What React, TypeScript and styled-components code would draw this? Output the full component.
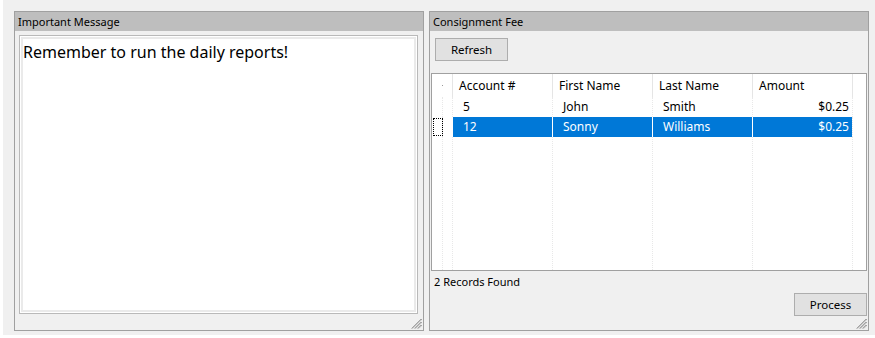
import React from "react";
import styled, { createGlobalStyle } from "styled-components";

const Global = createGlobalStyle`
  html, body { margin: 0; padding: 0; background: #ffffff; }
  body { font-family: "Noto Sans", "DejaVu Sans", sans-serif; color: #000; }
  * { box-sizing: border-box; }
`;

const Form = styled.div`
  width: 873px;
  height: 335px;
  margin-left: 3px;
  background: #f0f0f0;
  display: flex;
  gap: 5px;
  padding: 11px 0 0 11px;
`;

const Panel = styled.section<{ $w: number }>`
  position: relative;
  width: ${(p) => p.$w}px;
  height: 320px;
  border: 1px solid #a0a0a0;
  background: #f0f0f0;
  display: flex;
  flex-direction: column;
`;

const PanelHeader = styled.div`
  height: 19px;
  background: #bebebe;
  font-size: 11px;
  line-height: 19px;
  padding-left: 3px;
  color: #000;
  white-space: nowrap;
`;

const PanelBody = styled.div`
  flex: 1;
  display: flex;
  flex-direction: column;
  padding: 4px 5px 0 4px;
`;

const MessageBox = styled.div`
  height: 279px;
  border: 1px solid #b9b9b9;
  background: #fff;
  box-shadow: inset 0 0 0 1px #fff, inset 0 0 0 3px #eaeaea;
  padding: 4px 3px;
  font-size: 16px;
  line-height: 24px;
`;

const Grip = styled.svg`
  position: absolute;
  right: 1px;
  bottom: 1px;
  width: 11px;
  height: 11px;
`;

const Button = styled.button<{ $w: number }>`
  width: ${(p) => p.$w}px;
  height: 23px;
  background: #e1e1e1;
  border: 1px solid #adadad;
  font-family: inherit;
  font-size: 11.5px;
  color: #000;
  padding: 0;
`;

const RightBody = styled.div`
  flex: 1;
  display: flex;
  flex-direction: column;
  padding: 7px 1px 0 1px;
`;

const ButtonRow = styled.div<{ $end?: boolean }>`
  display: flex;
  justify-content: ${(p) => (p.$end ? "flex-end" : "flex-start")};
  padding: ${(p) => (p.$end ? "0" : "0 0 0 4px")};
`;

const Grid = styled.div`
  margin-top: 12px;
  height: 198px;
  border: 1px solid #a0a0a0;
  background: #fff;
  position: relative;
  overflow: hidden;
`;

const cols = "10px 10px 100px 100px 100px 100px 14px";

const HeaderRow = styled.div`
  display: grid;
  grid-template-columns: ${cols};
  height: 23px;
  font-size: 12px;
`;

const HeadCell = styled.div<{ $sep?: "solid" | "none" }>`
  padding-left: 6px;
  line-height: 23px;
  white-space: nowrap;
  border-left: ${(p) =>
    p.$sep === "solid" ? "1px solid #e5e5e5" : "1px solid transparent"};
  position: relative;
`;

const Tick = styled.span`
  position: absolute;
  left: -1px;
  top: 11px;
  width: 1px;
  height: 1px;
  background: #9a9a9a;
`;

const BodyRow = styled.div`
  display: grid;
  grid-template-columns: ${cols};
  height: 20px;
  font-size: 12px;
`;

const Cell = styled.div<{ $sel?: boolean; $right?: boolean }>`
  line-height: 20px;
  white-space: nowrap;
  padding: ${(p) => (p.$right ? "0 3px 0 0" : "0 0 0 10px")};
  text-align: ${(p) => (p.$right ? "right" : "left")};
  background: ${(p) => (p.$sel ? "#0078d7" : "transparent")};
  color: ${(p) => (p.$sel ? "#fff" : "#000")};
  border-left: 1px ${(p) => (p.$sel ? "solid #fff" : "dotted #e8e8e8")};
`;

const FocusCell = styled.div`
  padding: 1px 0 0 1px;
`;

const FocusRect = styled.div`
  width: 10px;
  height: 18px;
  border: 1px dotted #000;
  position: relative;
  z-index: 1;
`;

const Filler = styled.div`
  display: grid;
  grid-template-columns: ${cols};
  height: 135px;
`;

const FillCol = styled.div<{ $first?: boolean }>`
  border-left: ${(p) => (p.$first ? "none" : "1px dotted #e8e8e8")};
`;

const Status = styled.div`
  font-size: 11px;
  line-height: 22px;
  padding-left: 3px;
  height: 22px;
`;

const GripIcon = () => (
  <Grip viewBox="0 0 11 11">
    <g stroke="#5a5a5a" strokeWidth="1">
      <line x1="10.5" y1="1" x2="1" y2="10.5" />
      <line x1="10.5" y1="4" x2="4" y2="10.5" />
      <line x1="10.5" y1="7" x2="7" y2="10.5" />
    </g>
    <g stroke="#d8d8d8" strokeWidth="1">
      <line x1="10.5" y1="2" x2="2" y2="10.5" />
      <line x1="10.5" y1="5" x2="5" y2="10.5" />
      <line x1="10.5" y1="8" x2="8" y2="10.5" />
    </g>
  </Grip>
);

const rows = [
  { acct: "5", first: "John", last: "Smith", amt: "$0.25", sel: false },
  { acct: "12", first: "Sonny", last: "Williams", amt: "$0.25", sel: true },
];

export default function App() {
  return (
    <>
      <Global />
      <Form>
        <Panel $w={410}>
          <PanelHeader>Important Message</PanelHeader>
          <PanelBody>
            <MessageBox>Remember to run the daily reports!</MessageBox>
          </PanelBody>
          <GripIcon />
        </Panel>
        <Panel $w={440}>
          <PanelHeader>Consignment Fee</PanelHeader>
          <RightBody>
            <ButtonRow>
              <Button $w={73}>Refresh</Button>
            </ButtonRow>
            <Grid>
              <HeaderRow>
                <HeadCell $sep="none" />
                <HeadCell $sep="none">
                  <Tick />
                </HeadCell>
                <HeadCell $sep="solid">Account #</HeadCell>
                <HeadCell $sep="solid">First Name</HeadCell>
                <HeadCell $sep="solid">Last Name</HeadCell>
                <HeadCell $sep="solid">Amount</HeadCell>
                <HeadCell $sep="solid" />
              </HeaderRow>
              {rows.map((r) => (
                <BodyRow key={r.acct}>
                  <FocusCell>{r.sel ? <FocusRect /> : null}</FocusCell>
                  <Cell />
                  <Cell $sel={r.sel}>{r.acct}</Cell>
                  <Cell $sel={r.sel}>{r.first}</Cell>
                  <Cell $sel={r.sel}>{r.last}</Cell>
                  <Cell $sel={r.sel} $right>
                    {r.amt}
                  </Cell>
                  <Cell />
                </BodyRow>
              ))}
              <Filler>
                <FillCol $first />
                <FillCol />
                <FillCol />
                <FillCol />
                <FillCol />
                <FillCol />
                <FillCol />
              </Filler>
            </Grid>
            <Status>2 Records Found</Status>
            <ButtonRow $end>
              <Button $w={73}>Process</Button>
            </ButtonRow>
          </RightBody>
          <GripIcon />
        </Panel>
      </Form>
    </>
  );
}
